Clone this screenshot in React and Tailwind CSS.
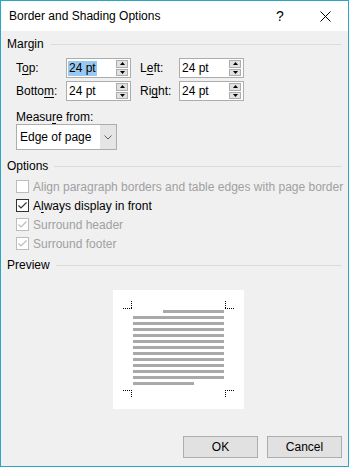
import React from 'react';

const font = { fontFamily: '"Liberation Sans", Arial, sans-serif' };

const Spinner = () => (
  <div className="absolute right-[2px] top-[1px] bottom-[1px] w-[12px] flex flex-col gap-[1px]">
    <div className="flex-1 bg-[#e1e1e1] border border-[#adadad] flex items-center justify-center">
      <svg width="5" height="3" viewBox="0 0 5 3"><path d="M2.5 0 L5 3 L0 3 Z" fill="#000" /></svg>
    </div>
    <div className="flex-1 bg-[#e1e1e1] border border-[#adadad] flex items-center justify-center">
      <svg width="5" height="3" viewBox="0 0 5 3"><path d="M0 0 L5 0 L2.5 3 Z" fill="#000" /></svg>
    </div>
  </div>
);

const NumberBox = ({ selected }) => (
  <div className="relative w-[65px] h-[20px] bg-white border border-[#adadad] flex items-center pl-[1px]">
    <span className={selected ? 'bg-[#99c8f0] px-[1px] leading-[15px]' : 'px-[1px] leading-[15px]'}>24 pt</span>
    <Spinner />
  </div>
);

const GroupHeader = ({ children, className }) => (
  <div className={`flex items-center h-4 ${className}`}>
    <span className="text-black">{children}</span>
    <div className="flex-1 h-px bg-[#dcdcdc] ml-[6px]" />
  </div>
);

const Check = ({ checked, disabled, children }) => (
  <div className="flex items-center h-[19px] whitespace-nowrap">
    <div className={`w-[13px] h-[13px] shrink-0 bg-white border flex items-center justify-center ${disabled ? 'border-[#bcbcbc]' : 'border-[#333333]'}`}>
      {checked && (
        <svg width="11" height="11" viewBox="0 0 11 11">
          <path d="M1.5 5.5 L4 8 L9.5 2.5" fill="none" stroke={disabled ? '#bcbcbc' : '#333333'} strokeWidth="1.2" />
        </svg>
      )}
    </div>
    <span className={`ml-[4px] ${disabled ? 'text-[#a0a0a0]' : 'text-black'}`}>{children}</span>
  </div>
);

const u = (s) => <span className="underline underline-offset-2">{s}</span>;

const Preview = () => {
  const lines = [];
  for (let i = 0; i < 13; i++) {
    const x1 = i === 0 ? 50 : 20;
    const x2 = i === 12 ? 81 : 111;
    lines.push(<rect key={i} x={x1} y={20 + i * 6} width={x2 - x1} height="3" fill="#a9a9a9" />);
  }
  const dot = { stroke: '#000', strokeWidth: 1, strokeDasharray: '1 1', fill: 'none' };
  return (
    <div className="w-[131px] h-[119px] bg-white ml-[106px] mt-[17px]">
      <svg width="131" height="119" viewBox="0 0 131 119">
        {lines}
        <path d="M10 18.5 H19" {...dot} />
        <path d="M18.5 11 V19" {...dot} />
        <path d="M112 18.5 H121" {...dot} />
        <path d="M112.5 11 V19" {...dot} />
        <path d="M10 100.5 H19" {...dot} />
        <path d="M18.5 100 V108" {...dot} />
        <path d="M112 100.5 H121" {...dot} />
        <path d="M112.5 100 V108" {...dot} />
      </svg>
    </div>
  );
};

export default function App() {
  return (
    <div className="w-[349px] h-[467px] border border-[#2ba5c4] flex flex-col text-[12px] text-black" style={font}>
      <div className="h-[30px] bg-white flex items-center pl-[8px] shrink-0">
        <span className="flex-1">Border and Shading Options</span>
        <span className="w-[20px] text-center text-[14px] mr-[30px]">?</span>
        <svg width="11" height="11" viewBox="0 0 11 11" className="mr-[17px]">
          <path d="M0.5 0.5 L10.5 10.5 M10.5 0.5 L0.5 10.5" stroke="#000" strokeWidth="1" />
        </svg>
      </div>

      <div className="flex-1 bg-[#f0f0f0] flex flex-col pl-[6px] pr-[6px]">
        <GroupHeader className="mt-[5px]">Margin</GroupHeader>

        <div className="mt-[6px] pl-[9px] flex flex-col gap-[3px]">
          <div className="flex items-center h-[20px]">
            <span className="w-[50px]">T{u('o')}p:</span>
            <NumberBox selected />
            <span className="w-[48px] pl-[9px]">L{u('e')}ft:</span>
            <NumberBox />
          </div>
          <div className="flex items-center h-[20px]">
            <span className="w-[50px]">Botto{u('m')}:</span>
            <NumberBox />
            <span className="w-[48px] pl-[9px]">Ri{u('g')}ht:</span>
            <NumberBox />
          </div>
        </div>

        <div className="pl-[9px] mt-[10px] h-[13px] leading-[13px]">Measu{u('r')}e from:</div>
        <div className="ml-[9px] w-[101px] h-[26px] border border-[#adadad] bg-white flex">
          <div className="flex-1 flex items-center pl-[3px]">Edge of page</div>
          <div className="w-[16px] bg-[#e5e5e5] flex items-center justify-center">
            <svg width="8" height="5" viewBox="0 0 8 5"><path d="M0.5 0.5 L4 4 L7.5 0.5" fill="none" stroke="#606060" strokeWidth="1" /></svg>
          </div>
        </div>

        <GroupHeader className="mt-[8px]">Options</GroupHeader>
        <div className="pl-[9px] mt-[3px] flex flex-col">
          <Check disabled>Align paragraph borders and table edges with page border</Check>
          <Check checked>A{u('l')}ways display in front</Check>
          <Check checked disabled>Surround header</Check>
          <Check checked disabled>Surround footer</Check>
        </div>

        <GroupHeader className="mt-[4px]">Preview</GroupHeader>
        <Preview />

        <div className="mt-[27px] flex justify-end gap-[9px]">
          <button className="w-[75px] h-[22px] bg-[#e1e1e1] border border-[#adadad]">OK</button>
          <button className="w-[75px] h-[22px] bg-[#e1e1e1] border border-[#adadad]">Cancel</button>
        </div>
      </div>
    </div>
  );
}
